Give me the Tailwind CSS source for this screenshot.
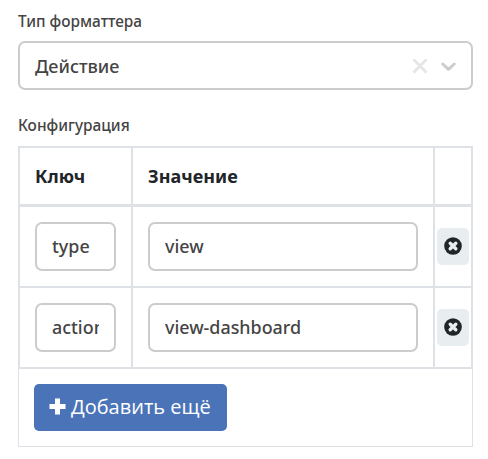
<!DOCTYPE html>
<html lang="ru">
<head>
<meta charset="utf-8">
<title>Форматтер</title>
<script src="https://cdn.jsdelivr.net/npm/@tailwindcss/browser@4"></script>
</head>
<body class="bg-white font-['Noto_Sans','Open_Sans',sans-serif] font-medium text-[#444]">
<svg class="hidden">
  <symbol id="remove" viewBox="0 0 18 18"><circle cx="9" cy="9" r="8.8" fill="#212529"/><path d="M6.2 6.2l5.6 5.6M11.8 6.2l-5.6 5.6" stroke="#e8edef" stroke-width="3.4" stroke-linecap="round"/></symbol>
</svg>
<main class="ml-[18px] w-[455px] pt-[11px]">
  <label class="block h-[30px] text-[15.4px] leading-[22px]">Тип форматтера</label>
  <div class="flex h-[49px] items-center rounded-[7px] border-2 border-[#ccc] pl-[15px] pr-[15px] text-[18px]">
    <span class="grow pt-[2px]">Действие</span>
    <svg class="mr-[13px] mt-px size-[16px]" viewBox="0 0 16 16" fill="none" stroke="#e6e6e6" stroke-width="3" stroke-linecap="round"><path d="M2.3 2.3l11.4 11.4M13.7 2.3L2.3 13.7"/></svg>
    <svg class="mt-[3px] h-[10px] w-[15px]" viewBox="0 0 15 10" fill="none" stroke="#ccc" stroke-width="3" stroke-linecap="round" stroke-linejoin="round"><path d="M1.8 2l5.7 5.3L13.2 2"/></svg>
  </div>
  <label class="block h-[56px] pt-[25px] text-[15.4px] leading-[22px]">Конфигурация</label>
  <section class="border-b border-[#dee2e6]">
    <div class="border-2 border-[#dee2e6]">
      <div class="grid h-[59px] grid-cols-[111px_1fr_38px] border-b-3 border-[#dee2e6] text-[18px] font-bold leading-[57px] text-[#212529]">
        <div class="pl-[15px]">Ключ</div>
        <div class="border-l-2 border-[#dee2e6] pl-[15px]">Значение</div>
        <div class="border-l-2 border-[#dee2e6]"></div>
      </div>
      <div class="grid h-[81px] grid-cols-[111px_1fr_38px] border-b-2 border-[#dee2e6]">
        <div class="p-[15px]"><input value="type" class="block h-[49px] w-full rounded-[7px] border-2 border-[#ccc] px-[15px] pb-[2px] text-[17.9px]"></div>
        <div class="border-l-2 border-[#dee2e6] p-[15px]"><input value="view" class="block h-[49px] w-full rounded-[7px] border-2 border-[#ccc] px-[15px] pb-[2px] text-[17.9px]"></div>
        <div class="flex items-center justify-center border-l-2 border-[#dee2e6]"><button class="flex h-[37px] w-[32px] items-center justify-center rounded-[5px] bg-[#e8edef] pb-[2px]"><svg class="size-[18px]"><use href="#remove"/></svg></button></div>
      </div>
      <div class="grid h-[79px] grid-cols-[111px_1fr_38px]">
        <div class="p-[15px]"><input value="action" class="block h-[49px] w-full rounded-[7px] border-2 border-[#ccc] px-[15px] pb-[2px] text-[17.9px]"></div>
        <div class="border-l-2 border-[#dee2e6] p-[15px]"><input value="view-dashboard" class="block h-[49px] w-full rounded-[7px] border-2 border-[#ccc] px-[15px] pb-[2px] text-[17.9px]"></div>
        <div class="flex items-center justify-center border-l-2 border-[#dee2e6]"><button class="flex h-[37px] w-[32px] items-center justify-center rounded-[5px] bg-[#e8edef] pb-[2px]"><svg class="size-[18px]"><use href="#remove"/></svg></button></div>
      </div>
    </div>
    <div class="h-[77px] border-x border-[#dee2e6] pl-[15px] pt-[15px]">
      <button class="flex h-[47px] w-[193px] items-center rounded-[5px] bg-[#4b74b8] pb-[2px] pl-[15px] text-[20px] font-normal text-white">
        <svg class="mr-[5px] size-[17px]" viewBox="0 0 17 17" fill="none" stroke="#fff" stroke-width="5"><path d="M8.5.5v16M.5 8.5h16"/></svg>
        <span class="whitespace-nowrap font-['Open_Sans','Noto_Sans',sans-serif]">Добавить ещё</span>
      </button>
    </div>
  </section>
</main>
</body>
</html>
